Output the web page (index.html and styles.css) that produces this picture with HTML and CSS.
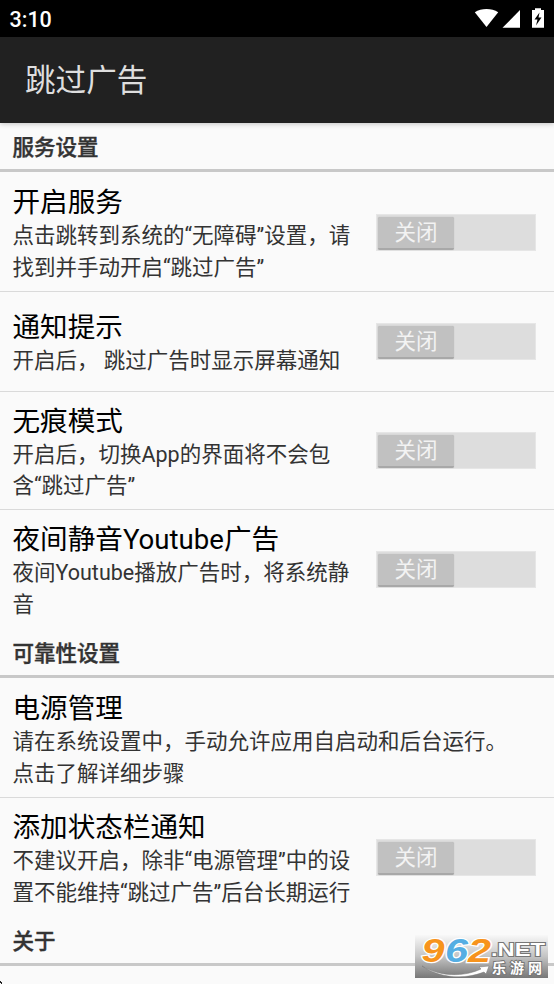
FILE: index.html
```html
<!DOCTYPE html>
<html lang="zh-CN">
<head>
<meta charset="utf-8">
<title>跳过广告</title>
<link rel="stylesheet" href="styles.css">
</head>
<body>
<div class="screen">
  <header class="status">
    <span class="time">3:10</span>
    <svg class="status-icons" width="76" height="22" viewBox="0 0 76 22" fill="#fff">
      <path d="M.8 4.200C7.500-.1 17.500-.1 24.200 4.200L12.500 19Z"/>
      <path d="M28.500 19.800 46 2V19.800Z"/>
      <path d="M58 2h3V.2h6V2h3v17.800H58Z"/>
      <path d="M65.500 4.500 60.500 11.500h3L62 17.500 67.500 9.500h-3Z" fill="#000"/>
    </svg>
  </header>
  <div class="appbar"><h1>跳过广告</h1></div>
  <main>
    <h2 class="section">服务设置</h2>
    <div class="row tall">
      <div class="text"><div class="title">开启服务</div><div class="desc">点击跳转到系统的“无障碍”设置，请<br>找到并手动开启“跳过广告”</div></div>
      <div class="switch"><span class="thumb">关闭</span></div>
    </div>
    <div class="row short">
      <div class="text"><div class="title">通知提示</div><div class="desc">开启后， 跳过广告时显示屏幕通知</div></div>
      <div class="switch"><span class="thumb">关闭</span></div>
    </div>
    <div class="row compact">
      <div class="text"><div class="title">无痕模式</div><div class="desc">开启后，切换App的界面将不会包<br>含“跳过广告”</div></div>
      <div class="switch"><span class="thumb">关闭</span></div>
    </div>
    <div class="row last">
      <div class="text"><div class="title">夜间静音Youtube广告</div><div class="desc">夜间Youtube播放广告时，将系统静<br>音</div></div>
      <div class="switch"><span class="thumb">关闭</span></div>
    </div>
    <h2 class="section">可靠性设置</h2>
    <div class="row tall">
      <div class="text"><div class="title">电源管理</div><div class="desc">请在系统设置中，手动允许应用自启动和后台运行。<br>点击了解详细步骤</div></div>
    </div>
    <div class="row last">
      <div class="text"><div class="title">添加状态栏通知</div><div class="desc">不建议开启，除非“电源管理”中的设<br>置不能维持“跳过广告”后台长期运行</div></div>
      <div class="switch"><span class="thumb">关闭</span></div>
    </div>
    <h2 class="section">关于</h2>
  </main>
  <svg class="corner" width="2" height="3" viewBox="0 0 2 3"><path d="M0 0h1v1h1v2H1V2H0Z" fill="#222"/></svg>
  <svg class="watermark" width="133" height="43" viewBox="0 0 133 43">
    <defs>
      <linearGradient id="shade" x1="0" y1="0" x2="0" y2="1">
        <stop offset="0" stop-color="#f8f8f8"/><stop offset=".5" stop-color="#c4c4c4"/><stop offset="1" stop-color="#777"/>
      </linearGradient>
    </defs>
    <rect width="133" height="43" fill="url(#shade)"/>
    <g class="digits">
      <text x="6.500" y="27" fill="#f7941d" textLength="23" lengthAdjust="spacingAndGlyphs">9</text>
      <text x="30" y="27" fill="#55aee3" textLength="23" lengthAdjust="spacingAndGlyphs">6</text>
      <text x="53" y="27" fill="#f7941d" textLength="23" lengthAdjust="spacingAndGlyphs">2</text>
    </g>
    <text class="net" x="76" y="21" textLength="54" lengthAdjust="spacingAndGlyphs">.NET</text>
    <text class="site" x="77" y="38">乐</text>
    <text class="site" x="95" y="38">游</text>
    <text class="site" x="113" y="38">网</text>
    <path d="M7 31C25 42 49 42 66 34L64 32 74 31 71 39 69 37C49 45 24 43 7 31Z" fill="#fff" stroke="#777" stroke-width=".5"/>
  </svg>
</div>
</body>
</html>
```
FILE: styles.css
```css
* { box-sizing: border-box; }
body {
  margin: 0;
  font-family: Roboto, "Noto Sans CJK SC", sans-serif;
  background: #fafafa;
}
.screen {
  position: relative;
  width: 554px;
  height: 984px;
  overflow: hidden;
}
.status {
  display: flex;
  justify-content: space-between;
  height: 37px;
  padding: 8px 0 0 9.500px;
  background: #000;
  color: #fff;
}
.time { font-size: 21.5px; line-height: 23px; font-weight: 500; }
.status-icons { margin-right: 4.500px; }
.appbar {
  position: relative;
  height: 86px;
  padding-left: 25px;
  background: #212121;
  box-shadow: 0 1px 5px rgba(0, 0, 0, .22);
}
h1 {
  margin: 0;
  color: #dedede;
  font-size: 30.6px;
  font-weight: 400;
  line-height: 88px;
}
.section {
  height: 49px;
  margin: 0;
  padding: 2px 12.500px 0;
  border-bottom: 3px solid #c8c8c8;
  color: #333;
  font-size: 21.5px;
  font-weight: 500;
  line-height: 45px;
  -webkit-text-stroke: .4px #333;
}
.row {
  display: flex;
  align-items: center;
  justify-content: space-between;
  height: 119px;
  padding: 0 18px 0 12.500px;
  border-bottom: 1px solid #dadada;
}
.tall { height: 120px; padding-top: 1px; }
.short { height: 100px; }
.compact { height: 118px; }
.last { border-color: transparent; }
.text { padding-top: 5.500px; white-space: nowrap; }
.title { height: 34px; color: #000; font-size: 27.6px; line-height: 34px; }
.desc { color: #333; font-size: 21.5px; line-height: 31.700px; }
.switch {
  flex: none;
  width: 160px;
  height: 37px;
  padding: 2px 1px;
  border: 1px solid #e6e6e6;
  background: #ddd;
}
.thumb {
  display: block;
  width: 76px;
  height: 33px;
  border-bottom: 2px solid #a8a8a8;
  border-radius: 2px;
  background: #c1c1c1;
  box-shadow: 0 0 1px #aaa;
  color: #f3f3f3;
  font-size: 21.5px;
  line-height: 32px;
  text-align: center;
}
.corner { position: absolute; left: 0; bottom: 0; }
.watermark {
  position: absolute;
  left: 415px;
  top: 935px;
  overflow: visible;
}
.digits {
  font: italic 700 34px "Liberation Sans", sans-serif;
  stroke: #fff;
  stroke-width: 2.500px;
  paint-order: stroke;
}
.net, .site {
  fill: #fff;
  stroke: #777;
  stroke-width: 2px;
  paint-order: stroke;
}
.net { font: 700 19px "Liberation Sans", sans-serif; }
.site { font: 700 14px "Noto Sans CJK SC", sans-serif; }
```
